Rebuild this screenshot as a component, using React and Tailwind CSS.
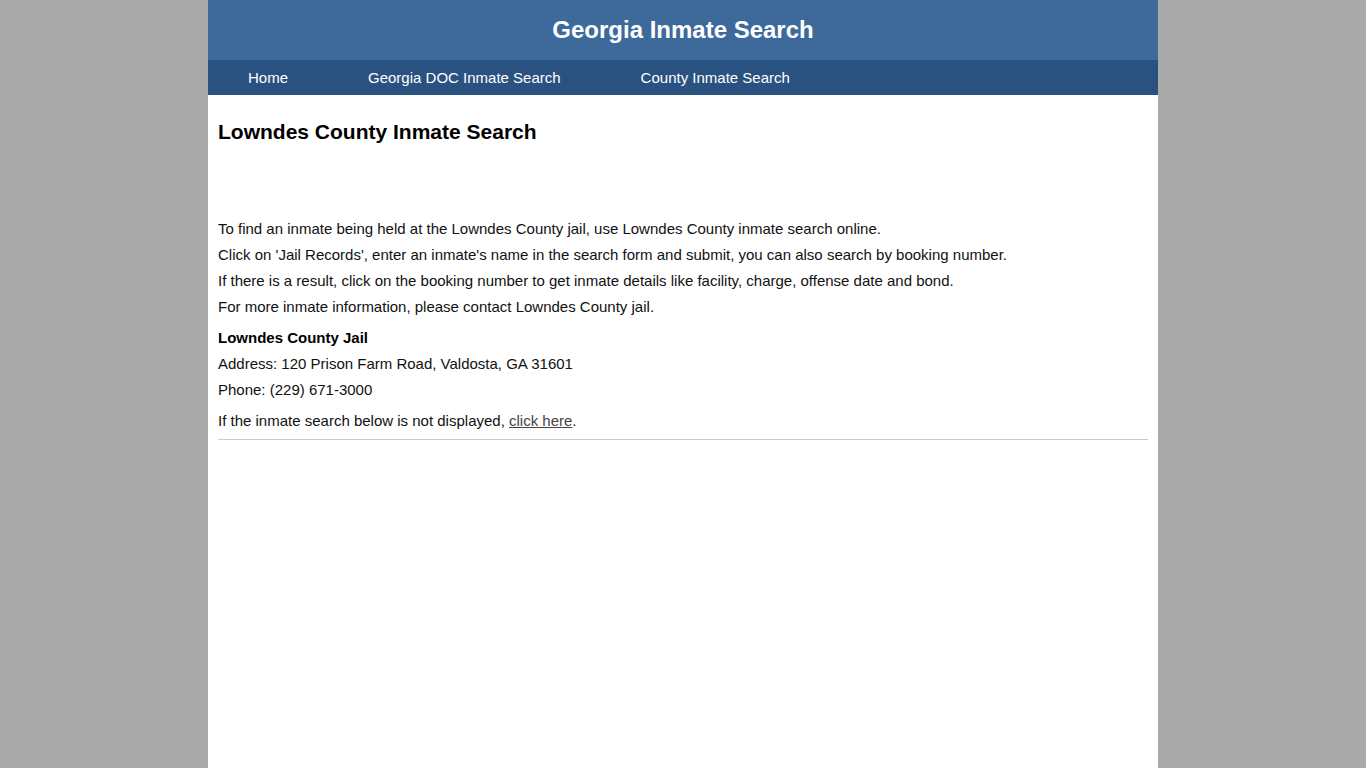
const navLinks = ["Home", "Georgia DOC Inmate Search", "County Inmate Search"];

export default function App() {
  return (
    <div className="min-h-screen bg-[#aaaaaa] font-['Liberation_Sans',Arial,sans-serif]">
      <div className="w-[950px] mx-auto min-h-screen bg-white">
        <header className="h-[60px] bg-[#3d6a9a] flex items-center justify-center">
          <h1 className="text-[24px] font-bold text-white">Georgia Inmate Search</h1>
        </header>
        <nav className="h-[35px] bg-[#2a5280] flex items-center pt-[2px]">
          {navLinks.map(link => (
            <a key={link} href="#" className="px-10 text-[15px] text-white">
              {link}
            </a>
          ))}
        </nav>
        <main className="px-[10px] text-[15px] text-[#111]">
          <h2 className="pt-[25px] text-[21px] leading-[24px] font-bold text-black">Lowndes County Inmate Search</h2>
          <div className="mt-[72px] leading-[26px]">
            <p>To find an inmate being held at the Lowndes County jail, use Lowndes County inmate search online.</p>
            <p>Click on 'Jail Records', enter an inmate's name in the search form and submit, you can also search by booking number.</p>
            <p>If there is a result, click on the booking number to get inmate details like facility, charge, offense date and bond.</p>
            <p>For more inmate information, please contact Lowndes County jail.</p>
          </div>
          <div className="mt-[5px] leading-[26px]">
            <p className="font-bold text-black">Lowndes County Jail</p>
            <p>Address: 120 Prison Farm Road, Valdosta, GA 31601</p>
            <p>Phone: (229) 671-3000</p>
          </div>
          <p className="mt-[5px] leading-[26px]">
            If the inmate search below is not displayed,{" "}
            <a href="#" className="text-[#444] underline">click here</a>.
          </p>
          <hr className="mt-[5px] border-[#cccccc]" />
        </main>
      </div>
    </div>
  );
}
